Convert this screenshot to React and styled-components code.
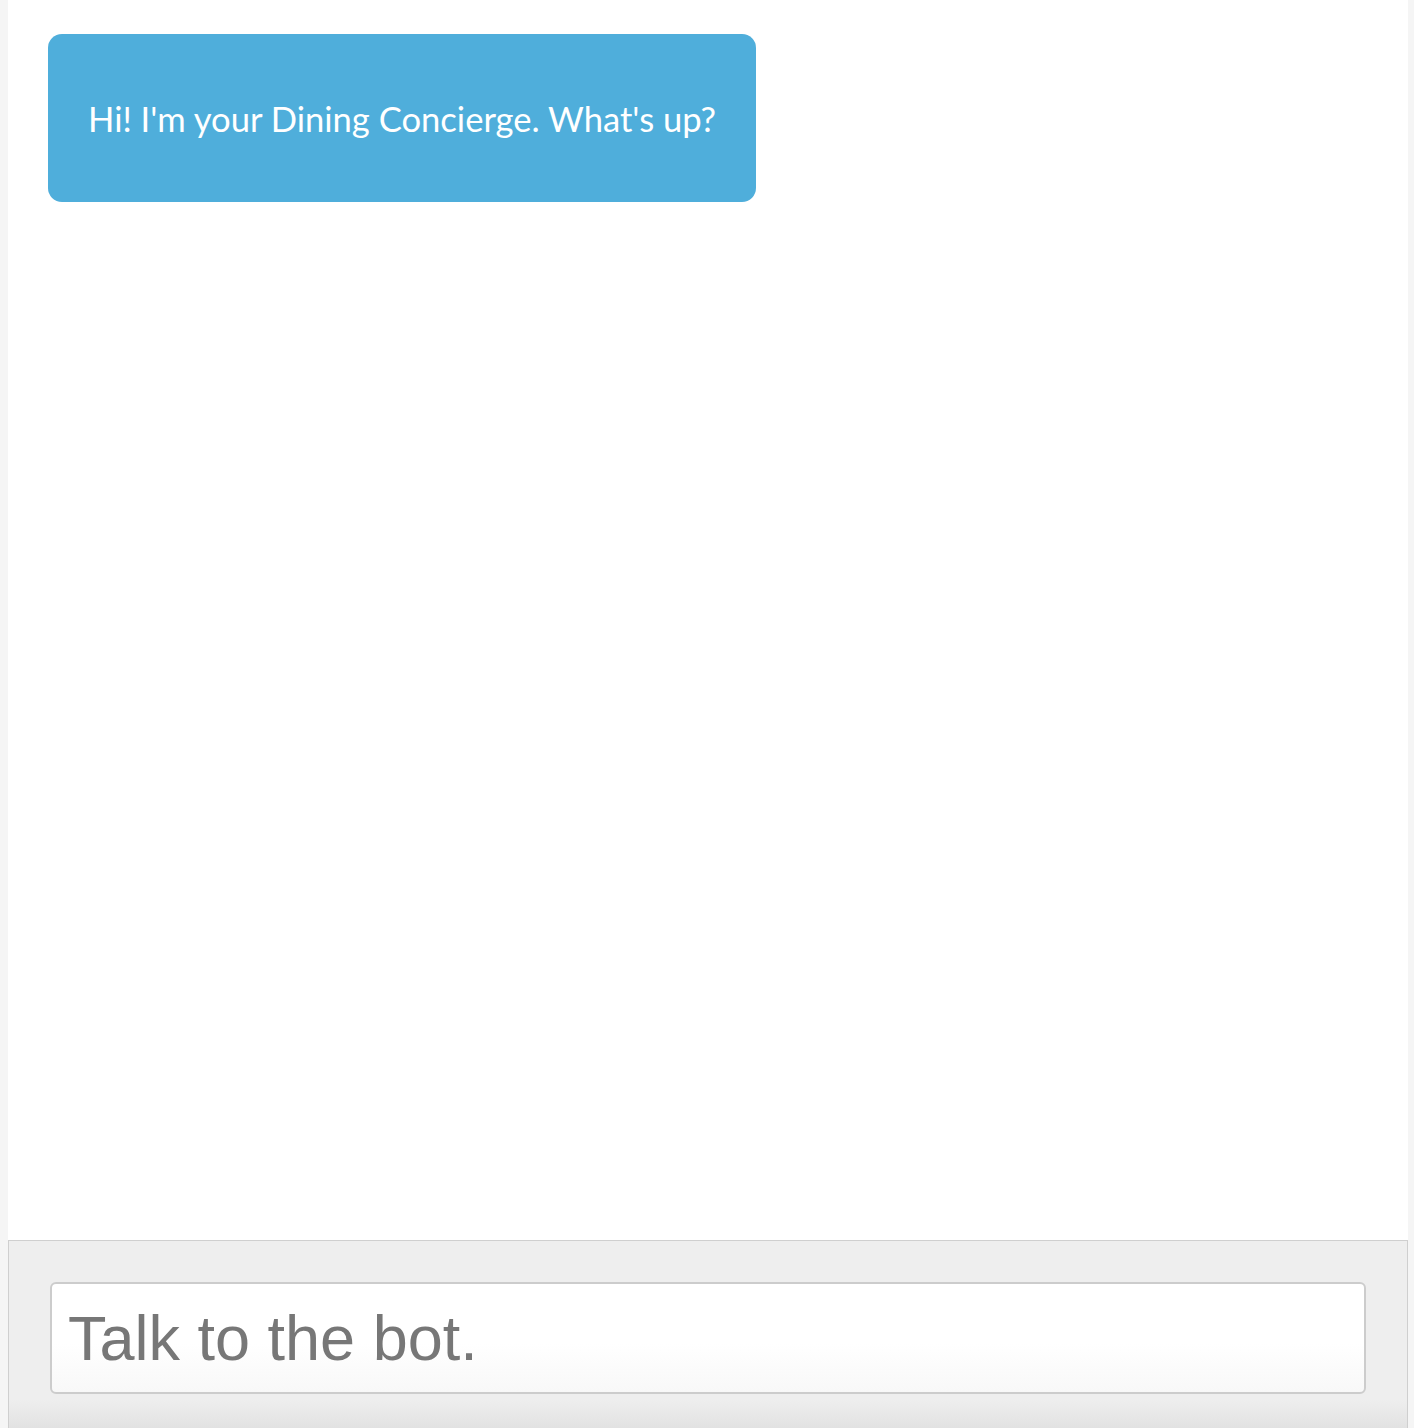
import React from "react";
import styled, { createGlobalStyle } from "styled-components";

const Global = createGlobalStyle`
  html, body { margin: 0; padding: 0; }
  body {
    background: #f5f5f5;
    overflow: hidden;
  }
`;

const Page = styled.div`
  width: 1400px;
  height: 1428px;
  margin-left: 8px;
  background: #ffffff;
  display: flex;
  flex-direction: column;
`;

const ChatArea = styled.div`
  height: 1240px;
  padding: 34px 40px 0;
  box-sizing: border-box;
  display: flex;
  flex-direction: column;
  align-items: flex-start;
`;

const Bubble = styled.div`
  display: flex;
  align-items: center;
  height: 168px;
  box-sizing: border-box;
  padding: 0 40px;
  border-radius: 14px;
  background: #4faedb;
  color: #ffffff;
  font-family: Lato, "Noto Sans", sans-serif;
  font-size: 34.6px;
  white-space: nowrap;
`;

const InputBar = styled.div`
  flex: 1;
  border-top: 1px solid #cfcfcf;
  border-left: 1px solid #cfcfcf;
  border-right: 1px solid #cfcfcf;
  background: linear-gradient(to bottom, #eeeeee 0%, #eeeeee 85%, #e2e2e2 100%);
  padding: 41px 41px 0;
  box-sizing: border-box;
`;

const Input = styled.input`
  display: block;
  width: 100%;
  height: 112px;
  box-sizing: border-box;
  border: 2px solid #cccccc;
  border-radius: 6px;
  background: linear-gradient(to bottom, #ffffff 0%, #ffffff 55%, #f8f8f8 100%);
  padding: 0 16px;
  font-family: "Liberation Sans", Arial, sans-serif;
  font-size: 63px;
  color: #333;
  outline: none;
  &::placeholder {
    color: #777777;
    opacity: 1;
  }
`;

export default function App() {
  return (
    <>
      <Global />
      <Page>
        <ChatArea>
          <Bubble>Hi! I'm your Dining Concierge. What's up?</Bubble>
        </ChatArea>
        <InputBar>
          <Input placeholder="Talk to the bot." />
        </InputBar>
      </Page>
    </>
  );
}
